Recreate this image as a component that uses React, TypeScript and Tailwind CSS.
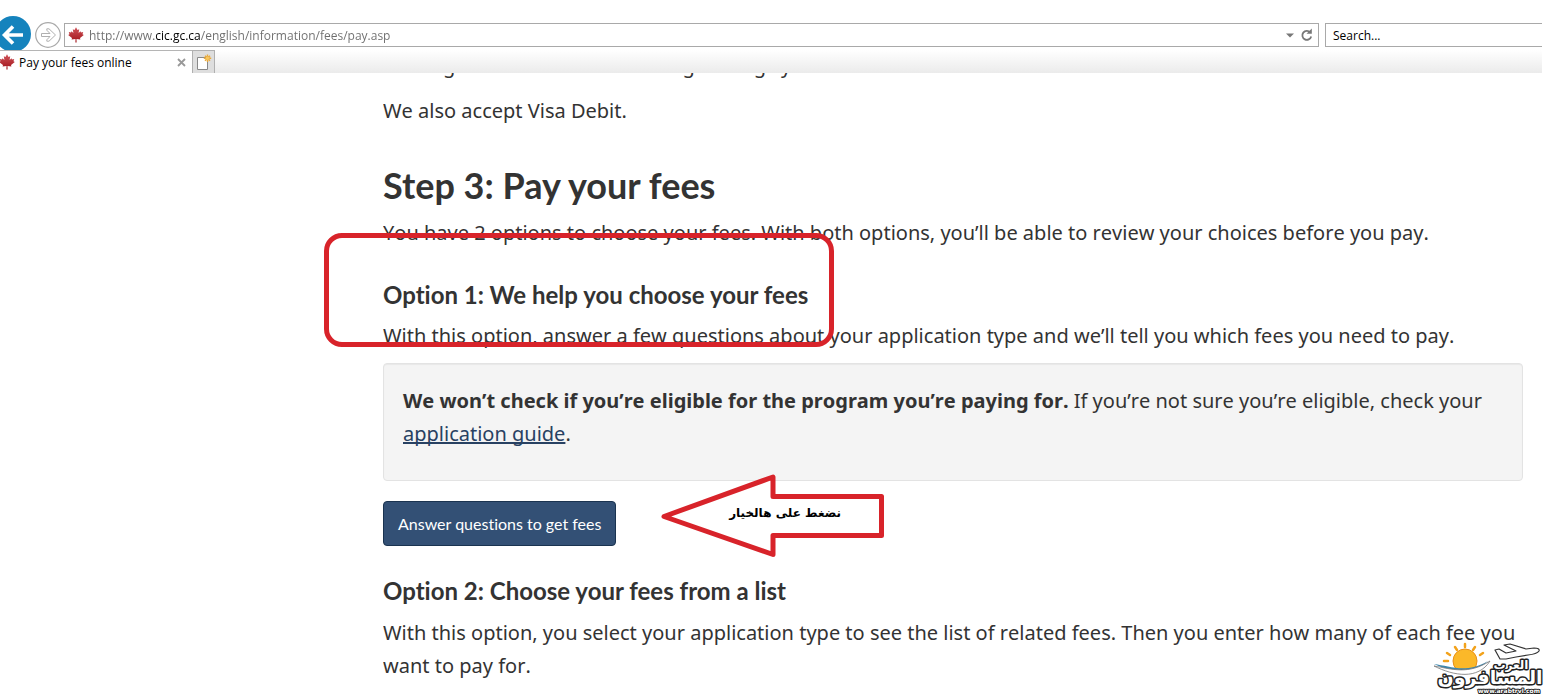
import React from "react";

const MapleLeaf: React.FC<{ className?: string }> = ({ className }) => (
  <svg className={className} viewBox="0 0 16 16" aria-hidden="true">
    <defs>
      <linearGradient id="leaf" x1="0" y1="0" x2="0" y2="1">
        <stop offset="0" stopColor="#d0545a" />
        <stop offset="1" stopColor="#a01218" />
      </linearGradient>
    </defs>
    <path
      fill="url(#leaf)"
      d="M8 0.3 L9.5 3 L11.2 2.2 L10.6 6 L12.5 4.3 L13 5.4 L15.2 5 L14.5 7.2 L15.8 8 L12 11 L12.4 12.4 L8.5 12 L8.6 15.6 L7.4 15.6 L7.5 12 L3.6 12.4 L4 11 L0.2 8 L1.5 7.2 L0.8 5 L3 5.4 L3.5 4.3 L5.4 6 L4.8 2.2 L6.5 3 Z"
    />
  </svg>
);

const AddressRow: React.FC = () => (
  <div className="flex h-[50px] items-end">
    <button type="button" aria-label="Back" className="-ml-[5px] h-[34px] w-9 shrink-0 overflow-hidden">
      <svg width="36" height="36" viewBox="0 0 36 36">
        <circle cx="18" cy="18" r="18" fill="#1583bd" />
        <path d="M28 19H9.500M18 10.500L9.500 19L18 27.500" fill="none" stroke="#fff" strokeWidth="3.600" />
      </svg>
    </button>
    <button type="button" aria-label="Forward" className="mb-[2px] ml-1 shrink-0">
      <svg width="26" height="26" viewBox="0 0 26 26">
        <circle cx="13" cy="13" r="12.300" fill="#fff" stroke="#a9a9a9" strokeWidth="1.200" />
        <path
          d="M6.500 11.500H15L11.800 8.200V6.800H14L20.500 13L14 19.200H11.800V17.800L15 14.500H6.500Z"
          fill="#fff"
          stroke="#b0b0b0"
        />
      </svg>
    </button>
    <div className="mb-[3px] ml-[3px] flex h-6 flex-1 items-center border border-[#a9a9a9] bg-white pl-[3px] pr-[5px]">
      <MapleLeaf className="h-4 w-4 shrink-0" />
      <input
        aria-label="Address"
        readOnly
        value="http://www.cic.gc.ca/english/information/fees/pay.asp"
        className="ml-[5px] min-w-0 flex-1 bg-[linear-gradient(90deg,#6d6d6d_65px,#000_65px,#000_112px,#6d6d6d_112px)] bg-clip-text pt-px font-['Open_Sans',sans-serif] text-xs text-transparent outline-none"
      />
      <button type="button" aria-label="Show address bar history">
        <svg width="8" height="5" viewBox="0 0 8 5">
          <path d="M0 0.500H8L4 4.500Z" fill="#777" />
        </svg>
      </button>
      <button type="button" aria-label="Refresh" className="ml-[7px]">
        <svg width="12" height="14" viewBox="0 0 12 14">
          <path d="M9.200 4.300A4.500 4.500 0 1 0 10.200 8.500" fill="none" stroke="#777" strokeWidth="1.800" />
          <path d="M5.500 5.800H10.800V0.500Z" fill="#777" />
        </svg>
      </button>
    </div>
    <input
      aria-label="Search"
      placeholder="Search..."
      className="mb-[3px] ml-1.5 h-6 w-[217px] border border-r-0 border-[#a9a9a9] pl-[7px] pt-px font-['Open_Sans',sans-serif] text-xs outline-none placeholder:text-black"
    />
  </div>
);

const TabRow: React.FC = () => (
  <div className="flex h-[23px] bg-linear-to-b from-white to-[#ebebeb]">
    <div className="flex w-48 items-center border-t border-[#b5b5b5] bg-white">
      <MapleLeaf className="-ml-px h-4 w-4 shrink-0" />
      <span className="ml-1 flex-1 pt-px font-['Open_Sans',sans-serif] text-xs text-black">Pay your fees online</span>
      <button type="button" aria-label="Close tab" className="mr-1.5">
        <svg width="9" height="9" viewBox="0 0 9 9">
          <path d="M1 1L8 8M8 1L1 8" stroke="#999" strokeWidth="1.800" />
        </svg>
      </button>
    </div>
    <button
      type="button"
      aria-label="New tab"
      className="flex w-[23px] items-center justify-center border border-b-0 border-[#b0b0b0] bg-[#dedede]"
    >
      <svg width="16" height="17" viewBox="0 0 16 17">
        <path d="M1.500 3.500H11.500V15.500H1.500Z" fill="#fff" stroke="#888" />
        <path
          d="M11.500 0.500V8M7.800 4.200H15.200M9 1.700L14 6.700M14 1.700L9 6.700"
          stroke="#e9a93a"
          strokeWidth="1.400"
        />
        <circle cx="11.500" cy="4.200" r="1.800" fill="#f7c65c" />
      </svg>
    </button>
  </div>
);

const HighlightBox: React.FC = () => (
  <div className="pointer-events-none absolute left-[324px] top-[233px] h-[114px] w-[510px] rounded-[18px] border-[5px] border-[#d8232a]" />
);

const ArrowNote: React.FC = () => (
  <div className="pointer-events-none absolute left-[660px] top-[473px] h-[86px] w-[226px]">
    <svg className="absolute inset-0" width="226" height="86" viewBox="0 0 226 86">
      <path
        d="M4 43.500L113 4V23.500H221.500V62.500H113V81.500Z"
        fill="none"
        stroke="#d8232a"
        strokeWidth="5"
        strokeLinejoin="round"
      />
    </svg>
    <span
      dir="rtl"
      className="absolute right-[45px] top-8 whitespace-nowrap font-['DejaVu_Sans',sans-serif] text-xs font-bold leading-4 text-black"
    >
      نضغط على هالخيار
    </span>
  </div>
);

const SiteLogo: React.FC = () => (
  <svg
    className="pointer-events-none absolute left-[1430px] top-[638px]"
    width="114"
    height="60"
    viewBox="0 0 114 60"
    role="img"
    aria-label="www.arabtrvl.com"
  >
    <g stroke="#f2a21b" strokeWidth="2.500" strokeLinecap="round">
      <path d="M35 6V9M25 9L27 12M45 9L43 12M17 15L20 17M53 15L50 17M14 23H18" />
    </g>
    <circle cx="35" cy="23" r="12" fill="#fbb829" stroke="#e8901a" />
    <path d="M4 26C20 28 36 36 58 23C44 38 22 35 4 26Z" fill="#3d86ad" />
    <path d="M4 28C22 31 38 37 60 23C48 42 24 38 4 28Z" fill="#fff" stroke="#777" strokeWidth="0.800" />
    <path
      d="M70 21L65 12L69 11L76 15L86 13L74 7L80 6L96 11L104 10Q110 10 109 13Q107 16 98 17L86 19L76 21Z"
      fill="#fff"
      stroke="#333"
      strokeWidth="1.200"
      strokeLinejoin="round"
    />
    <g
      fill="#fff"
      stroke="#222"
      strokeWidth="3"
      strokeLinejoin="round"
      paintOrder="stroke"
      textAnchor="middle"
      fontFamily="DejaVu Sans, sans-serif"
      fontWeight="bold"
    >
      <text x="60" y="46" fontSize="19">
        المسافرون
      </text>
      <text x="81" y="31" fontSize="12">
        العرب
      </text>
      <text x="79" y="55" fontSize="6" strokeWidth="2">
        www.arabtrvl.com
      </text>
    </g>
  </svg>
);

const App: React.FC = () => {
  return (
    <div className="relative h-screen overflow-hidden bg-white font-['Noto_Sans',sans-serif] text-[#333]">
      <header className="mr-1.5">
        <AddressRow />
        <TabRow />
      </header>

      <main className="ml-[383px] mr-[25px] overflow-hidden text-xl leading-[33px] [font-kerning:none] [font-variant-ligatures:none]">
        {/* The page is scrolled, so only the tail of this line shows */}
        <p className="-mt-6 mb-3">Missing information when saving 2 things you need.</p>
        <p>We also accept Visa Debit.</p>

        <h2 className="mt-[38px] font-['Lato',sans-serif] text-4xl font-bold leading-10 [font-kerning:normal]">
          Step 3: Pay your fees
        </h2>
        <p className="mt-[11px]">
          You have 2 options to choose your fees. With both options, you’ll be able to review your choices before you
          pay.
        </p>

        <h3 className="mt-8 font-['Lato',sans-serif] text-2xl font-bold leading-7 [font-kerning:normal]">
          Option 1: We help you choose your fees
        </h3>
        <p className="mt-[10px]">
          With this option, answer a few questions about your application type and we’ll tell you which fees you need to
          pay.
        </p>

        <div className="mt-[11px] rounded-sm border border-[#e3e3e3] bg-[#f4f4f4] px-[19px] pb-[30px] pt-5 shadow-[inset_0_1px_1px_rgba(0,0,0,0.05)]">
          <p>
            <strong className="font-bold">We won’t check if you’re eligible for the program you’re paying for.</strong>{" "}
            If you’re not sure you’re eligible, check your{" "}
            <a href="#guide" className="text-[#284162] underline [text-decoration-skip-ink:none]">
              application guide
            </a>
            .
          </p>
        </div>

        <button
          type="button"
          className="mt-5 block h-[45px] rounded-sm border border-[#1a3350] bg-[#335075] px-[14px] font-['Lato',sans-serif] text-base text-white [font-kerning:normal]"
        >
          Answer questions to get fees
        </button>

        <h3 className="mt-[31px] font-['Lato',sans-serif] text-2xl font-bold leading-7 [font-kerning:normal]">
          Option 2: Choose your fees from a list
        </h3>
        <p className="mt-[11px]">
          With this option, you select your application type to see the list of related fees. Then you enter how many of
          each fee you want to pay for.
        </p>
      </main>

      <HighlightBox />
      <ArrowNote />
      <SiteLogo />
    </div>
  );
};

export default App;
